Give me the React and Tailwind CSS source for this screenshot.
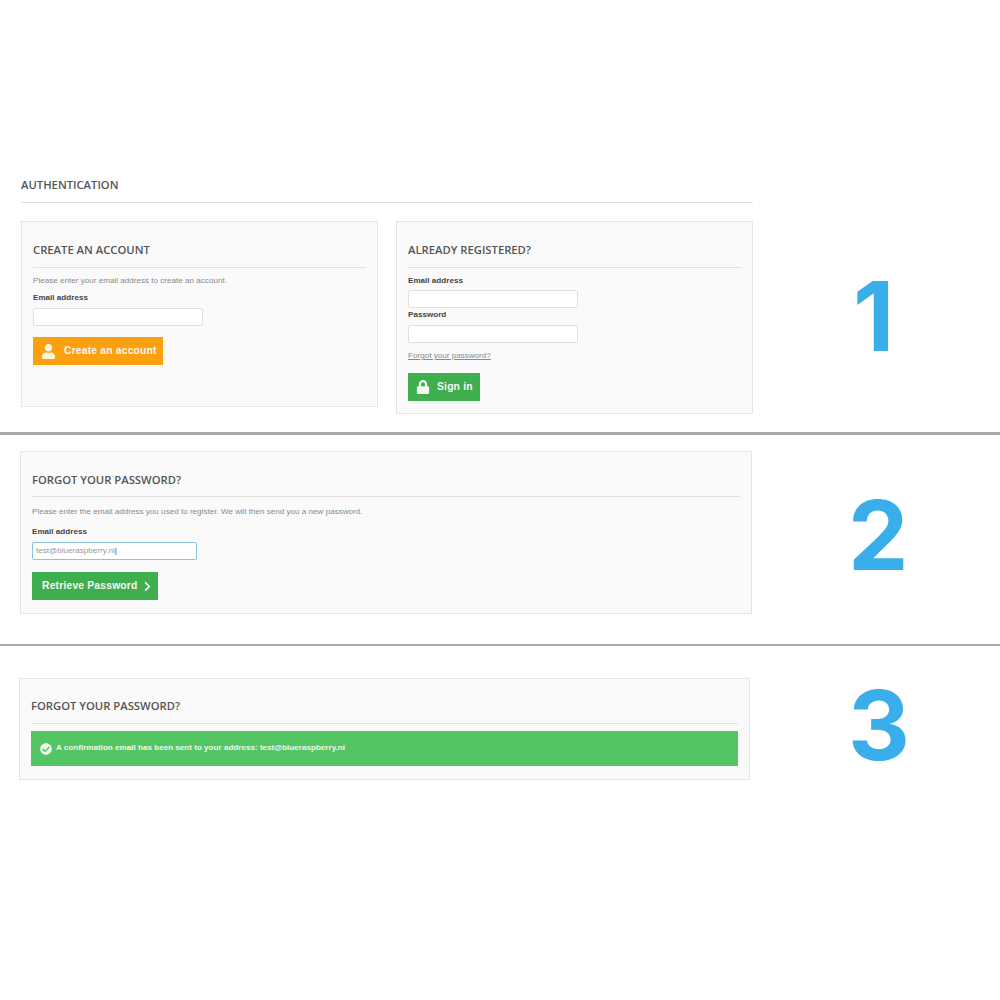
import { FaUser, FaLock, FaChevronRight, FaCheckCircle } from 'react-icons/fa'

const Title = ({ children, className = 'pb-[9px]' }) => (
  <h2 className={`font-['Open_Sans',sans-serif] text-[11.25px] leading-[16px] font-semibold text-[#555] border-b border-[#e0e0e0] ${className}`}>
    {children}
  </h2>
)

const Label = ({ children, className = '' }) => (
  <label className={`block text-[8.1px] leading-[12px] font-bold text-[#444] ${className}`}>{children}</label>
)

const Help = ({ children, className = '' }) => (
  <p className={`text-[8.1px] leading-[12px] text-[#8a8a8a] ${className}`}>{children}</p>
)

const Field = ({ className = '' }) => (
  <div className={`w-[170px] h-[18px] bg-white border border-[#dfdfdf] rounded-[2px] ${className}`} />
)

const Button = ({ className = '', children }) => (
  <button className={`flex items-center h-[28px] text-[10.3px] font-bold text-[#f6f6f6] tracking-[0.2px] ${className}`}>
    {children}
  </button>
)

const Digit = ({ children, className = '' }) => (
  <div className={`font-['Inter',sans-serif] font-bold text-[96px] leading-[77px] text-[#39aeea] ${className}`}>
    {children}
  </div>
)

const App = () => {
  return (
    <div className="w-[1000px] h-[1000px] bg-white font-['Liberation_Sans',sans-serif] overflow-hidden">
      <section className="h-[432px] flex">
        <div className="w-[732px] ml-[21px] pt-[177px]">
          <Title>AUTHENTICATION</Title>
          <div className="flex items-start gap-[18px] mt-[18px]">
            <div className="w-[357px] px-[11px] pt-[20px] pb-[41px] bg-[#fafafa] border border-[#e5e5e5]">
              <Title>CREATE AN ACCOUNT</Title>
              <Help className="mt-[7px]">Please enter your email address to create an account.</Help>
              <Label className="mt-[5px]">Email address</Label>
              <Field className="mt-[4px]" />
              <Button className="mt-[11px] w-[130px] pl-[8px] bg-[#fba00f]">
                <FaUser className="text-[15px] text-[#fdf3e2]" />
                <span className="ml-[8px]">Create an account</span>
              </Button>
            </div>
            <div className="w-[357px] px-[11px] pt-[20px] pb-[12px] bg-[#fafafa] border border-[#e5e5e5]">
              <Title>ALREADY REGISTERED?</Title>
              <Label className="mt-[7px]">Email address</Label>
              <Field className="mt-[3px]" />
              <Label className="mt-[1px]">Password</Label>
              <Field className="mt-[4px]" />
              <a className="block mt-[7px] text-[8.1px] leading-[12px] text-[#8a8a8a] underline">Forgot your password?</a>
              <Button className="mt-[11px] w-[72px] pl-[8px] bg-[#3fae4e]">
                <FaLock className="text-[14px] text-[#f0f8f0]" />
                <span className="ml-[7px]">Sign in</span>
              </Button>
            </div>
          </div>
        </div>
        <Digit className="ml-[100px] mt-[278px]">1</Digit>
      </section>

      <div className="h-[3px] bg-[#a9a9a9]" />

      <section className="h-[209px] flex">
        <div className="w-[732px] ml-[20px] mt-[16px] self-start px-[11px] pt-[20px] pb-[13px] bg-[#fafafa] border border-[#e5e5e5]">
          <Title className="pb-[8px]">FORGOT YOUR PASSWORD?</Title>
          <Help className="mt-[9px]">Please enter the email address you used to register. We will then send you a new password.</Help>
          <Label className="mt-[8px]">Email address</Label>
          <div className="mt-[4px] w-[165px] h-[18px] flex items-center px-[3px] bg-white border border-[#8fc1e3] rounded-[2px] text-[8.1px] text-[#999]">
            test@blueraspberry.nl<span className="text-[#444]">|</span>
          </div>
          <Button className="mt-[12px] w-[126px] pl-[10px] bg-[#3fae4e]">
            <span>Retrieve Password</span>
            <FaChevronRight className="ml-[4px] text-[11px] text-[#f0f8f0]" />
          </Button>
        </div>
        <Digit className="ml-[96px] mt-[62px]">2</Digit>
      </section>

      <div className="h-[2px] bg-[#a9a9a9]" />

      <section className="flex">
        <div className="w-[731px] ml-[19px] mt-[32px] self-start px-[11px] pt-[19px] pb-[13px] bg-[#fafafa] border border-[#e5e5e5]">
          <Title>FORGOT YOUR PASSWORD?</Title>
          <div className="mt-[7px] h-[35px] flex items-center pl-[9px] bg-[#53c663] text-[8.1px] font-bold text-[#f4f4f4]">
            <FaCheckCircle className="text-[12px] text-[#eef8ee]" />
            <span className="ml-[4px]">A confirmation email has been sent to your address: test@blueraspberry.nl</span>
          </div>
        </div>
        <Digit className="ml-[98px] mt-[41px]">3</Digit>
      </section>
    </div>
  )
}

export default App
